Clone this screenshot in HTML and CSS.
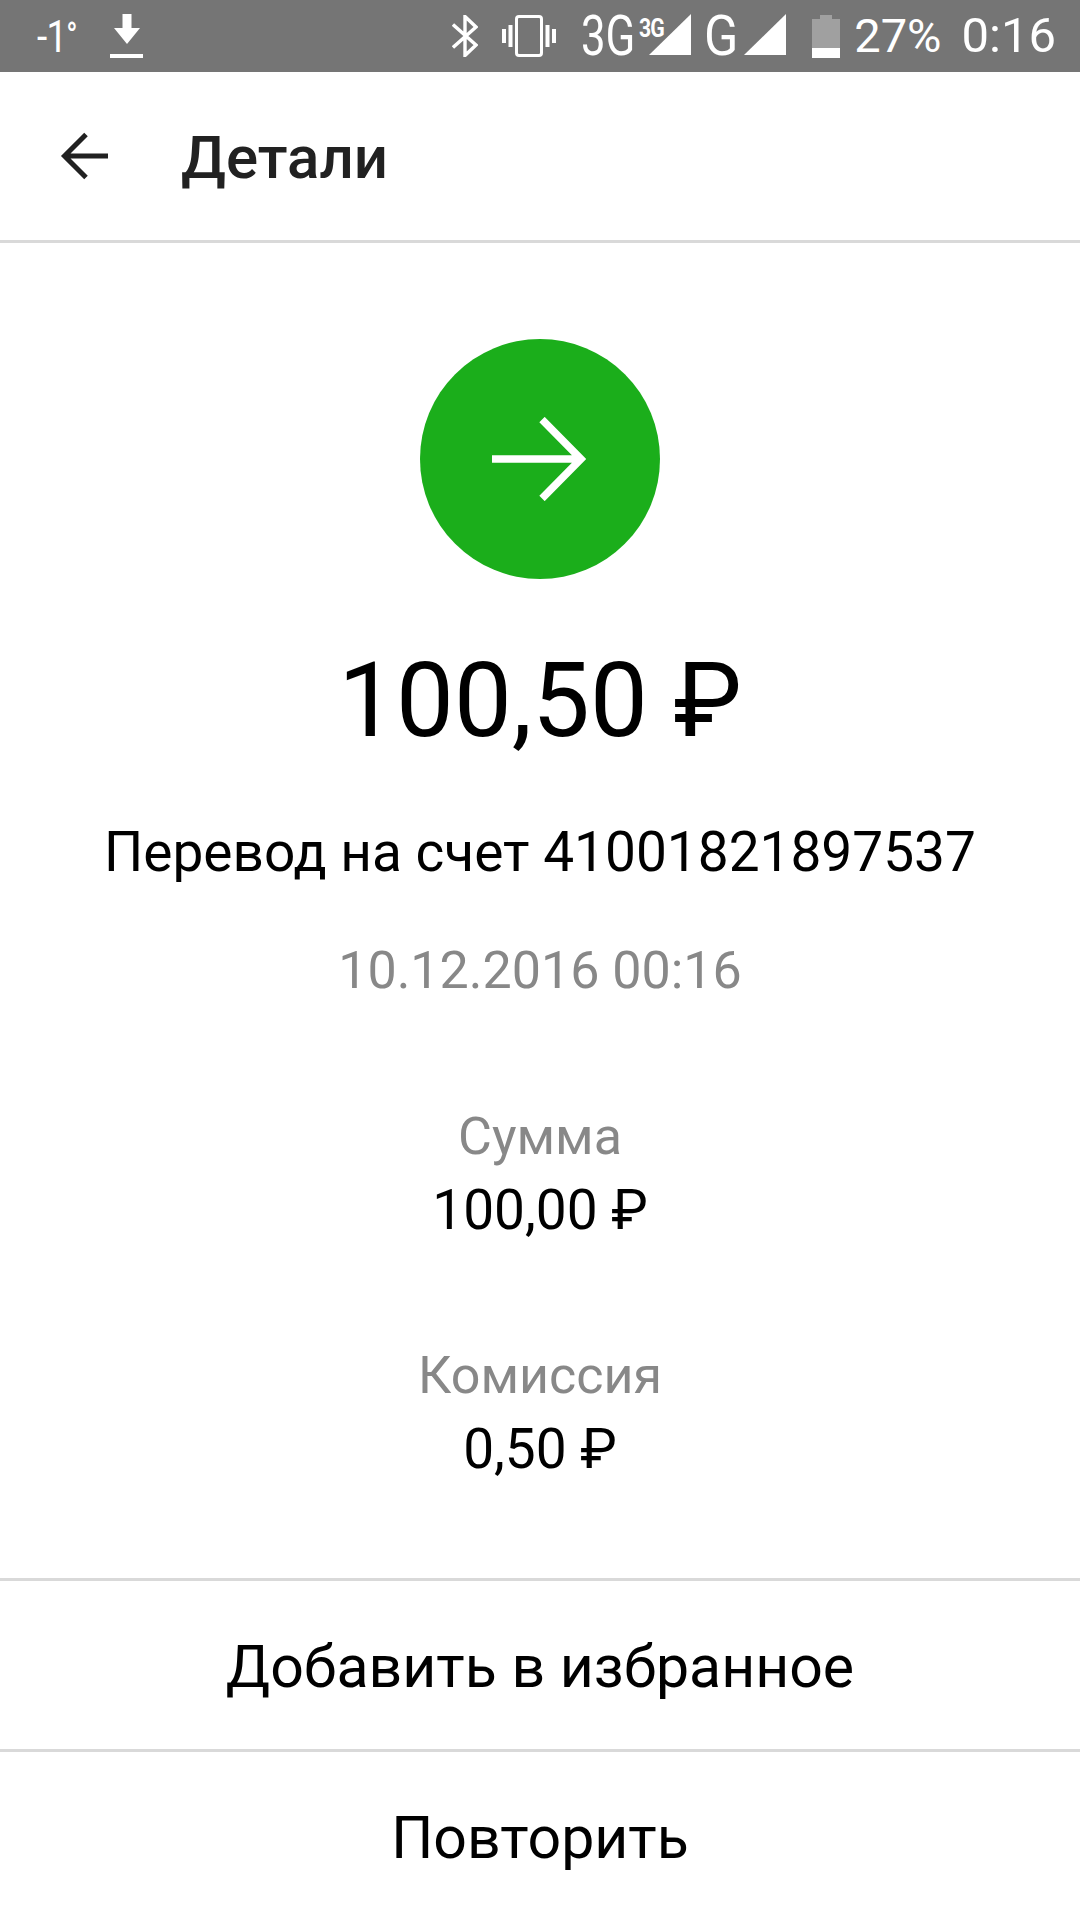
FILE: index.html
```html
<!DOCTYPE html>
<html lang="ru">
<head>
<meta charset="utf-8">
<title>Детали</title>
<link rel="stylesheet" href="styles.css">
</head>
<body>
<div class="screen">
  <header class="status">
    <div class="status-left">
      <span class="temp">-1<span class="deg">°</span></span>
      <svg class="ic-dl" width="33" height="44" viewBox="0 0 33 44"><path d="M12.500 0h9v14H30L17 30 4 14h8.500z" fill="#fff"/><rect y="40" width="33" height="4" fill="#fff"/></svg>
    </div>
    <div class="status-right">
      <svg class="ic-bt" width="26" height="42" viewBox="0 0 26 42"><path d="M1 9.500l23 20.500-11 10.500V1.500l11 10.500L1 32.500" fill="none" stroke="#fff" stroke-width="3.400"/></svg>
      <svg class="ic-vib" width="54" height="42" viewBox="0 0 54 42"><rect x="14.500" y="1.500" width="25" height="39" rx="2.500" fill="none" stroke="#fff" stroke-width="3"/><path d="M0 14h4v14H0zM6.500 10h4v22h-4zM43.500 10h4v22h-4zM50 14h4v14h-4z" fill="#fff"/></svg>
      <span class="net net-3g">3G</span>
      <span class="sup">3G</span>
      <svg class="ic-sig" width="42" height="41" viewBox="0 0 42 41"><path d="M42 0v41H0z" fill="#fff"/></svg>
      <span class="net net-g">G</span>
      <svg class="ic-sig2" width="42" height="41" viewBox="0 0 42 41"><path d="M42 0v41H0z" fill="#fff"/></svg>
      <svg class="ic-bat" width="28" height="43" viewBox="0 0 28 43"><path d="M0 4h8V0h12v4h8v39H0z" fill="#a0a0a0"/><rect y="33" width="28" height="10" fill="#fff"/></svg>
      <span class="pct">27%</span>
      <span class="clock">0:16</span>
    </div>
  </header>
  <nav class="toolbar">
    <svg class="back" width="48" height="48" viewBox="0 0 48 48"><path d="M48 24H4M26 2.500 4.500 24 26 45.500" fill="none" stroke="#212121" stroke-width="5"/></svg>
    <h1 class="title">Детали</h1>
  </nav>
  <main class="content">
    <div class="circle">
      <svg class="go" width="94" height="84" viewBox="0 0 94 84"><path d="M0 42h88M50 2.500 89 42 50 81.500" fill="none" stroke="#fff" stroke-width="7.500"/></svg>
    </div>
    <div class="amount">100,50 ₽</div>
    <div class="desc">Перевод на счет 41001821897537</div>
    <div class="date">10.12.2016 00:16</div>
    <div class="pair pair-first">
      <div class="label">Сумма</div>
      <div class="value">100,00 ₽</div>
    </div>
    <div class="pair pair-second">
      <div class="label">Комиссия</div>
      <div class="value">0,50 ₽</div>
    </div>
  </main>
  <div class="action">Добавить в избранное</div>
  <div class="action">Повторить</div>
</div>
</body>
</html>
```

FILE: styles.css
```css
* { box-sizing: border-box; margin: 0; padding: 0; }
html, body { width: 1080px; height: 1920px; background: #fff; overflow: hidden; }
body { font-family: Roboto, "Noto Sans", sans-serif; color: #000; }
.screen { display: flex; flex-direction: column; width: 1080px; height: 1920px; }

.status { display: flex; justify-content: space-between; align-items: center; height: 72px; background: #757575; color: #fff; padding: 0 24px 0 37px; flex: none; }
.status-left { display: flex; align-items: center; }
.temp { display: block; width: 73px; font-size: 45px; line-height: 50px; letter-spacing: -1px; transform: scaleX(.82); transform-origin: left center; }
.deg { font-size: 36px; font-weight: 500; vertical-align: 4px; }
.status-right { display: flex; align-items: center; }
.ic-bt { margin-right: 24px; }
.ic-vib { margin-right: 25px; }
.net { display: block; font-size: 56px; font-weight: 400; line-height: 60px; transform: scaleX(.78); transform-origin: left center; }
.net-3g { width: 58px; }
.sup { font-size: 25px; font-weight: 700; line-height: 26px; letter-spacing: -1px; align-self: flex-start; margin-top: 10px; margin-right: -19px; transform: scaleX(.85); transform-origin: left center; }
.ic-sig { margin-right: 13px; margin-top: -3px; }
.net-g { width: 40px; transform: scaleX(.9); }
.ic-sig2 { margin-right: 26px; margin-top: -3px; }
.ic-bat { margin-right: 14px; }
.pct { font-size: 47px; font-weight: 400; line-height: 56px; margin-right: 20px; }
.clock { font-size: 49px; font-weight: 400; line-height: 56px; }

.toolbar { display: flex; align-items: center; height: 171px; padding-left: 60px; border-bottom: 3px solid #d9d9d9; flex: none; }
.back { flex: none; }
.title { font-size: 60px; font-weight: 500; line-height: 70px; color: #212121; margin-left: 73px; padding-top: 4px; }

.content { flex: 1; display: flex; flex-direction: column; align-items: center; text-align: center; }
.circle { display: flex; align-items: center; justify-content: center; width: 240px; height: 240px; margin-top: 96px; border-radius: 50%; background: #1bae1b; }
.go { margin-right: 2px; }
.amount { font-size: 103px; line-height: 124px; margin-top: 60px; }
.desc { font-size: 55px; line-height: 64px; margin-top: 57px; }
.date { font-size: 52px; line-height: 56px; margin-top: 59px; color: #888; }
.pair-first { margin-top: 110px; }
.pair-second { margin-top: 106px; }
.label { font-size: 52px; line-height: 56px; color: #888; }
.value { font-size: 55px; line-height: 64px; margin-top: 13px; }

.action { display: flex; align-items: center; justify-content: center; height: 171px; padding-top: 2px; border-top: 3px solid #d9d9d9; font-size: 59px; flex: none; }
```
